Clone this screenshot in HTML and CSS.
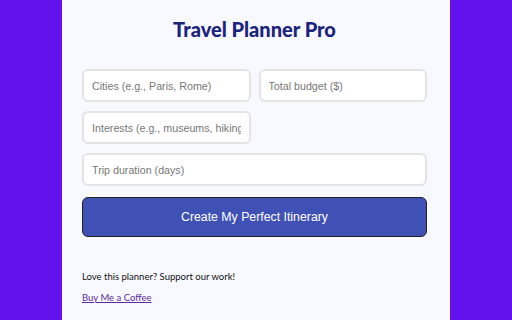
FILE: index.html
```html
<!DOCTYPE html>
<html lang="en">
<head>
    <meta charset="UTF-8">
    <meta name="viewport" content="width=device-width, initial-scale=1.0">
    <title>Travel Planner Pro</title>
    <link rel="stylesheet" href="styles.css">
</head>
<body>
    <div class="container">
        <h1>Travel Planner Pro</h1>

        <div class="form-grid">
            <input type="text" id="cities" placeholder="Cities (e.g., Paris, Rome)">
            <input type="number" id="budget" placeholder="Total budget ($)">
            <input type="text" id="interests" placeholder="Interests (e.g., museums, hiking, food)">
            <input type="number" id="duration" class="wide" placeholder="Trip duration (days)">
        </div>

        <button id="planBtn">Create My Perfect Itinerary</button>

        <div class="support">
            <p>Love this planner? Support our work!</p>
            <a href="#">Buy Me a Coffee</a>
        </div>
    </div>
</body>
</html>
```

FILE: styles.css
```css
body {
    margin: 0;
    background-color: #6212ec;
    font-family: Lato, 'Noto Sans', sans-serif;
}
.container {
    width: 388px;
    min-height: 320px;
    margin: 0 auto;
    box-sizing: border-box;
    padding: 17px 23px 0 20px;
    background-color: #f8f9ff;
}
h1 {
    margin: 0 0 28px;
    font-size: 20px;
    line-height: 24px;
    font-weight: 900;
    text-align: center;
    color: #1a237e;
}
.form-grid {
    display: grid;
    grid-template-columns: 1fr 1fr;
    gap: 9px 8px;
}
input {
    height: 33px;
    box-sizing: border-box;
    width: 100%;
    padding: 0 8px;
    border: 2px solid #e4e4e6;
    border-radius: 6px;
    background-color: white;
    font-family: 'Liberation Sans', Arial, sans-serif;
    font-size: 10.7px;
    color: #333;
}
input::placeholder {
    color: #777;
}
input[type=number]::-webkit-inner-spin-button {
    -webkit-appearance: none;
}
.wide {
    grid-column: span 2;
}
button {
    display: block;
    width: 100%;
    height: 40px;
    margin-top: 11px;
    border: 1px solid #222;
    border-radius: 6px;
    background-color: #3f51b5;
    color: white;
    font-family: 'Liberation Sans', Arial, sans-serif;
    font-size: 12.3px;
    cursor: pointer;
}
.support {
    margin-top: 33px;
    font-size: 9.5px;
    line-height: 14px;
    color: #111;
}
.support p {
    margin: 0 0 7px;
}
.support a {
    color: #5b2ca0;
}
```
